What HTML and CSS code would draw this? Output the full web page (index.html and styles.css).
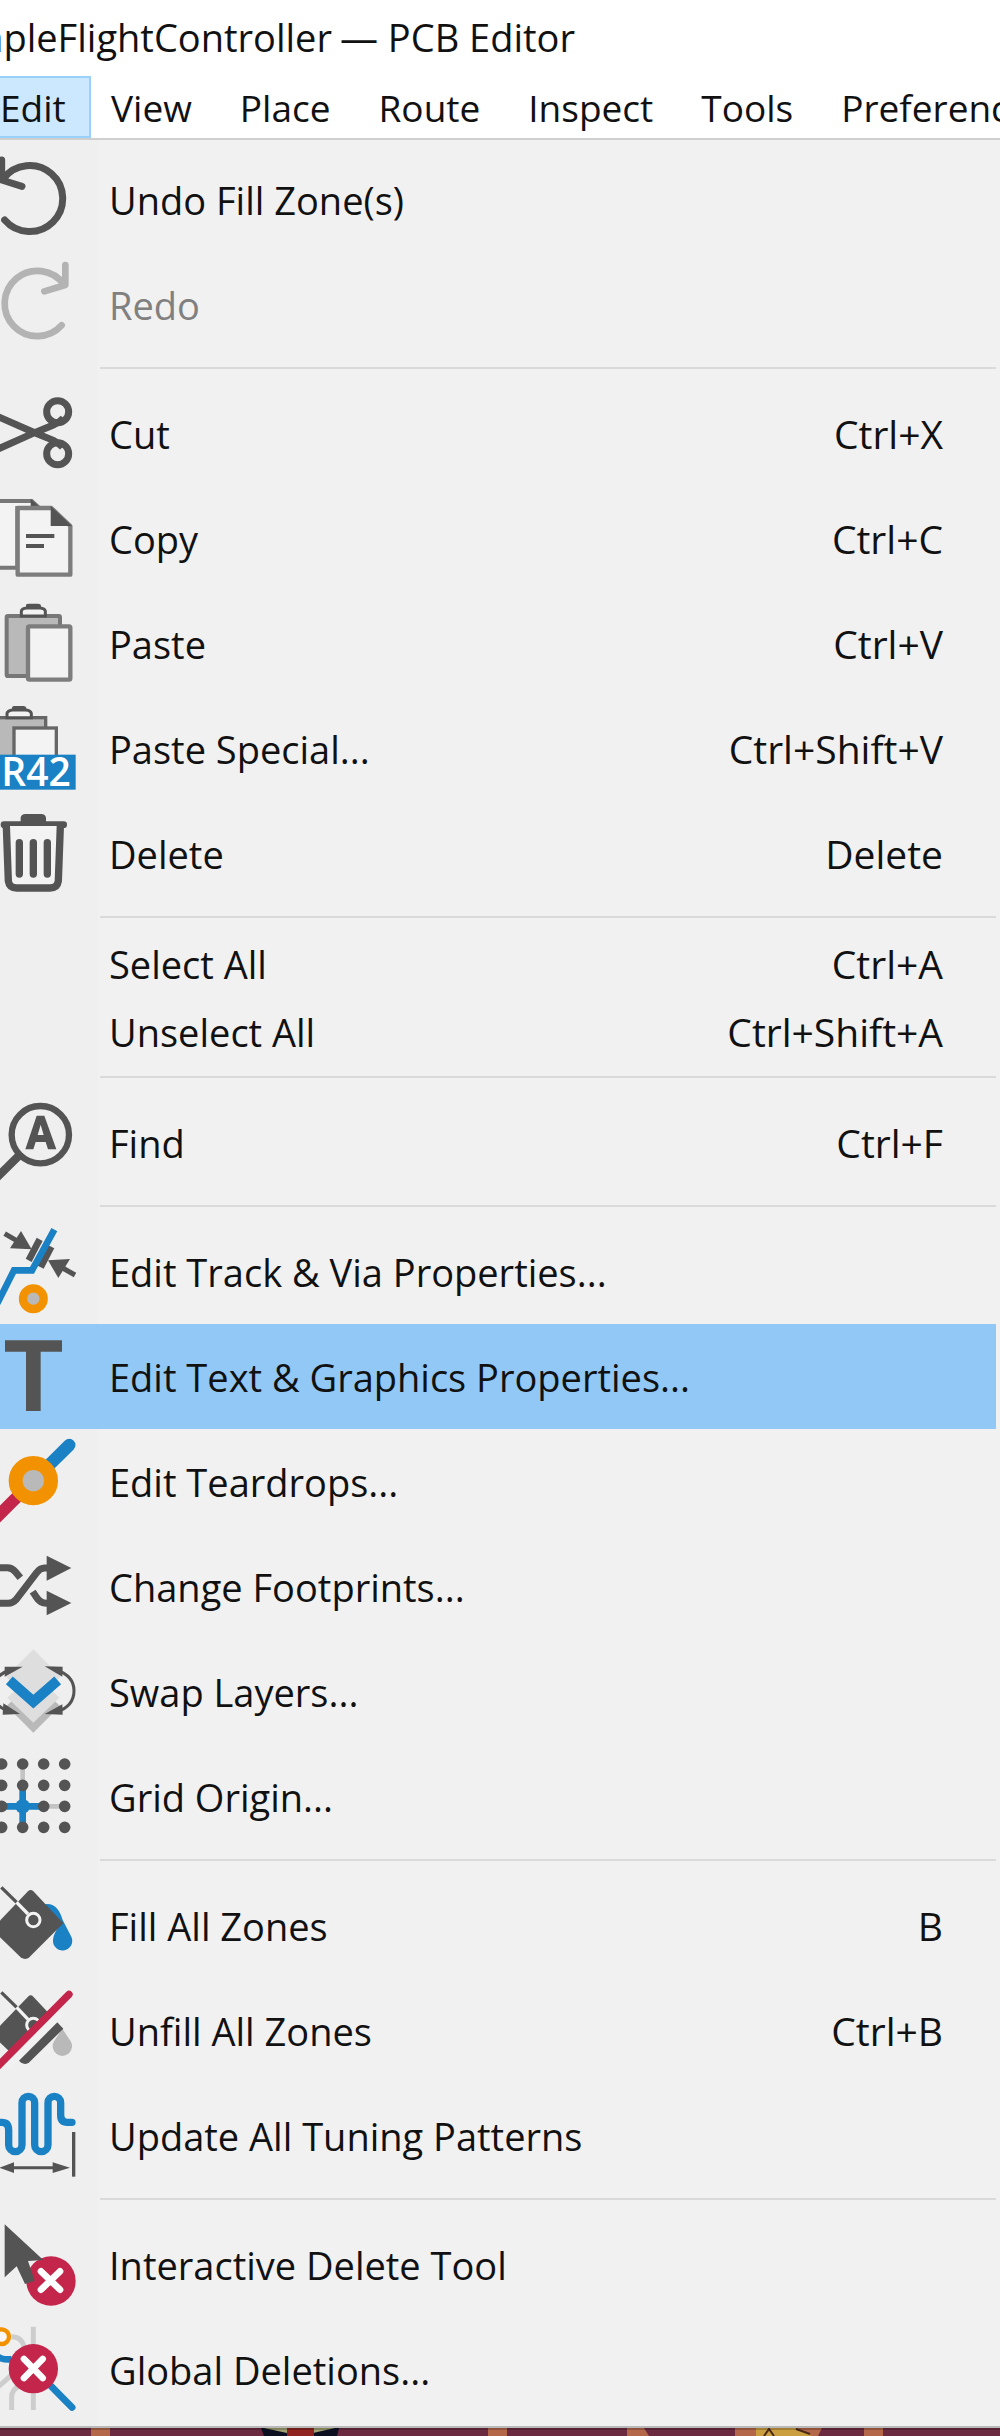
FILE: index.html
```html
<!DOCTYPE html>
<html lang="en">
<head>
<meta charset="utf-8">
<meta name="viewport" content="width=device-width, initial-scale=1">
<title>SimpleFlightController — PCB Editor</title>
<link rel="stylesheet" href="styles.css">
</head>
<body>
<header class="titlebar"><h1 class="title"><span class="project">SimpleFlightController</span> — PCB Editor</h1></header>
<nav class="menubar" aria-label="Main menu">
  <button class="menu-title open" aria-expanded="true">Edit</button>
  <button class="menu-title">View</button>
  <button class="menu-title">Place</button>
  <button class="menu-title">Route</button>
  <button class="menu-title">Inspect</button>
  <button class="menu-title">Tools</button>
  <button class="menu-title">Preferences</button>
</nav>
<main class="menu" role="menu" aria-label="Edit">
  <button class="item" role="menuitem">
    <svg class="icon" viewBox="0 21 294 315" aria-hidden="true"><g fill="none" stroke="#545454" stroke-width="21" stroke-linecap="round"><path d="M14 240A99 99 0 1 0 10 116"/><path d="M5 60V120L66 139" stroke-linejoin="round"/></g></svg>
    <span class="label">Undo Fill Zone(s)</span>
  </button>
  <button class="item" role="menuitem" disabled>
    <svg class="icon" viewBox="0 336 294 315" aria-hidden="true"><g fill="none" stroke="#b3b3b3" stroke-width="20" stroke-linecap="round" stroke-linejoin="round"><path d="M185 556A98 98 0 1 1 192 434"/><path d="M196 375V435L133 454"/></g></svg>
    <span class="label">Redo</span>
  </button>
  <hr class="separator">
  <button class="item" role="menuitem">
    <svg class="icon" viewBox="0 723 294 315" aria-hidden="true"><g fill="none" stroke="#545454" stroke-width="21"><circle cx="173" cy="815" r="33"/><circle cx="173" cy="941" r="33"/><path d="M-10 828L104 878L160 901Q178 910 188 922M-10 929L104 878L160 855Q178 847 190 834"/></g></svg>
    <span class="label">Cut</span><kbd class="shortcut">Ctrl+X</kbd>
  </button>
  <button class="item" role="menuitem">
    <svg class="icon" viewBox="0 18 294 315" aria-hidden="true"><path d="M-20 63H95L118 84H52V263H-20" fill="#f3f3f3" stroke="#777" stroke-width="12"/><path d="M92 56L122 84H92Z" fill="#545454"/><path d="M53 84H154L211 138V284H53Z" fill="#f3f3f3" stroke="#7d7d7d" stroke-width="13" stroke-linejoin="round"/><path d="M152 78L216 138H152Z" fill="#545454"/><path d="M78 168H163M78 198H132" stroke="#545454" stroke-width="12"/></svg>
    <span class="label">Copy</span><kbd class="shortcut">Ctrl+C</kbd>
  </button>
  <button class="item" role="menuitem">
    <svg class="icon" viewBox="0 333 294 315" aria-hidden="true"><rect x="20" y="408" width="160" height="180" rx="4" fill="#b9b9b9" stroke="#777" stroke-width="12"/><path d="M64 408V393Q66 385 80 384H120Q134 385 136 393V408Z" fill="#f3f3f3" stroke="#545454" stroke-width="9"/><path d="M78 385V374Q80 371 86 371H114Q122 371 123 376V385Z" fill="#545454"/><rect x="84" y="439" width="127" height="160" rx="4" fill="#f3f3f3" stroke="#7d7d7d" stroke-width="13"/></svg>
    <span class="label">Paste</span><kbd class="shortcut">Ctrl+V</kbd>
  </button>
  <button class="item" role="menuitem">
    <svg class="icon" viewBox="0 648 294 315" aria-hidden="true"><rect x="-30" y="713" width="167" height="150" fill="#b9b9b9" stroke="#666" stroke-width="10"/><path d="M21 713V700Q23 692 38 690H78Q92 692 94 700V713Z" fill="#f3f3f3" stroke="#545454" stroke-width="9"/><path d="M36 691V682Q38 678 44 678H70Q78 678 79 684V691Z" fill="#545454"/><rect x="42" y="744" width="127" height="120" fill="#f3f3f3" stroke="#666" stroke-width="10"/><rect x="-10" y="824" width="237" height="105" fill="#1a81c4"/><text x="4" y="919" class="badge-text">R42</text></svg>
    <span class="label">Paste Special...</span><kbd class="shortcut">Ctrl+Shift+V</kbd>
  </button>
  <button class="item" role="menuitem">
    <svg class="icon" viewBox="0 963 294 315" aria-hidden="true"><path d="M62 1028V1013Q64 1002 76 1002H124Q136 1002 138 1013V1028Z" fill="#545454"/><path d="M12 1034H191" stroke="#545454" stroke-width="20" stroke-linecap="round"/><path d="M19 1038L25 1203Q28 1224 50 1224H150Q172 1224 175 1203L181 1038" fill="#f3f3f3" stroke="#545454" stroke-width="22"/><path d="M58 1088V1182M100 1088V1182M142 1088V1182" stroke="#545454" stroke-width="22" stroke-linecap="round"/></svg>
    <span class="label">Delete</span><kbd class="shortcut">Delete</kbd>
  </button>
  <hr class="separator">
  <button class="item compact" role="menuitem"><span class="label">Select All</span><kbd class="shortcut">Ctrl+A</kbd></button>
  <button class="item compact" role="menuitem"><span class="label">Unselect All</span><kbd class="shortcut">Ctrl+Shift+A</kbd></button>
  <hr class="separator">
  <button class="item" role="menuitem">
    <svg class="icon" viewBox="0 30 294 315" aria-hidden="true"><circle cx="121" cy="164" r="86" fill="none" stroke="#545454" stroke-width="19"/><path d="M58 226L-10 293" stroke="#545454" stroke-width="25"/><path d="M76 208L110 107H133L169 208H144L137 186H107L100 208ZM113 165H131L122 134Z" fill="#545454" fill-rule="evenodd"/></svg>
    <span class="label">Find</span><kbd class="shortcut">Ctrl+F</kbd>
  </button>
  <hr class="separator">
  <button class="item" role="menuitem">
    <svg class="icon" viewBox="0 417 294 315" aria-hidden="true"><g stroke="#545454"><path d="M14 461L50 482M188 564L225 585" stroke-width="15"/><path d="M86 541L119 478M122 562L154 500" stroke-width="20"/></g><path d="M63 453L95 508L30 505ZM144 541L210 537L175 594Z" fill="#545454"/><path d="M-8 670L42 571H96L163 449" fill="none" stroke="#1a81c4" stroke-width="20"/><circle cx="100" cy="656" r="31" fill="#b9b9b9" stroke="#f39200" stroke-width="25"/></svg>
    <span class="label">Edit Track &amp; Via Properties...</span>
  </button>
  <button class="item selected" role="menuitem">
    <svg class="icon" viewBox="0 732 294 315" aria-hidden="true"><path d="M15 781H186V815H122V993H78V815H15Z" fill="#545454"/></svg>
    <span class="label">Edit Text &amp; Graphics Properties...</span>
  </button>
  <button class="item" role="menuitem">
    <svg class="icon" viewBox="0 27 294 315" aria-hidden="true"><path d="M100 182L-15 297" stroke="#c4254a" stroke-width="36"/><path d="M100 182L208 75" stroke="#1a81c4" stroke-width="37" stroke-linecap="round"/><circle cx="100" cy="182" r="53" fill="#b9b9b9" stroke="#f39200" stroke-width="42"/></svg>
    <span class="label">Edit Teardrops...</span>
  </button>
  <button class="item" role="menuitem">
    <svg class="icon" viewBox="0 342 294 315" aria-hidden="true"><g fill="none" stroke="#545454" stroke-width="21"><path d="M-10 443H22Q36 443 46 455L61 473M-10 550H25Q38 550 48 539L110 458Q120 444 134 444H150M98 515L108 530Q120 550 140 550H150"/></g><path d="M140 407L214 444L140 482ZM140 512L214 549L140 586Z" fill="#545454"/></svg>
    <span class="label">Change Footprints...</span>
  </button>
  <button class="item" role="menuitem">
    <svg class="icon" viewBox="0 657 294 315" aria-hidden="true"><path d="M20 858L100 780L180 858L100 938Z" fill="#b9b9b9"/><path d="M22 833L100 758L178 833L100 908Z" fill="#dedede"/><path d="M18 770L100 688L182 770L100 850Z" fill="#dedede"/><g fill="none" stroke="#545454" stroke-width="9"><path d="M170 750Q222 768 222 812Q222 858 170 876M30 750Q-22 768 -22 812Q-22 858 30 876"/></g><path d="M134 739L188 740L187 770ZM134 882L187 853L188 884ZM68 740L14 740L14 770ZM60 882L10 850L8 884Z" fill="#545454"/><path d="M28 781L100 845L173 781" fill="none" stroke="#1a81c4" stroke-width="31"/></svg>
    <span class="label">Swap Layers...</span>
  </button>
  <button class="item" role="menuitem">
    <svg class="icon" viewBox="0 972 294 315" aria-hidden="true"><path d="M68 1032V1100M120 1159H194" stroke="#c4c4c4" stroke-width="14"/><path d="M5 1159H130M68 1100V1220" stroke="#1a81c4" stroke-width="20"/><circle cx="68" cy="1159" r="22" fill="#1a81c4"/><g fill="none" stroke="#545454" stroke-width="35" stroke-linecap="round" stroke-dasharray="0 63"><path d="M5 1032H200M5 1096H200M5 1222H200M131 1159H200M5 1159H30"/></g></svg>
    <span class="label">Grid Origin...</span>
  </button>
  <hr class="separator">
  <button class="item" role="menuitem">
    <svg class="icon" viewBox="0 9 294 315" aria-hidden="true"><path d="M134 103Q172 96 188 150L214 200A29 29 0 1 1 160 204Q160 195 178 166L150 130Z" fill="#1a81c4"/><path d="M-12 164L84 64Q92 56 100 64L190 160L88 262Q76 272 62 262L-12 190Z" fill="#545454"/><path d="M4 52L50 97" stroke="#545454" stroke-width="10"/><path d="M50 97L84 132" stroke="#f3f3f3" stroke-width="10"/><circle cx="100" cy="150" r="20" fill="none" stroke="#f3f3f3" stroke-width="9"/></svg>
    <span class="label">Fill All Zones</span><kbd class="shortcut">B</kbd>
  </button>
  <button class="item" role="menuitem">
    <svg class="icon" viewBox="0 324 294 315" aria-hidden="true"><path d="M187 476L212 514A29 29 0 1 1 162 514Z" fill="#b9b9b9"/><path d="M-12 480L84 380Q92 372 100 380L190 476L88 577Q76 587 62 577L-12 506Z" fill="#545454"/><path d="M4 367L50 412" stroke="#545454" stroke-width="10"/><path d="M50 412L84 448" stroke="#f3f3f3" stroke-width="10"/><circle cx="100" cy="465" r="20" fill="none" stroke="#f3f3f3" stroke-width="9"/><path d="M22 590L184 428" stroke="#f1f1f1" stroke-width="24"/><path d="M-10 592L207 373" stroke="#c4254a" stroke-width="22" stroke-linecap="round"/></svg>
    <span class="label">Unfill All Zones</span><kbd class="shortcut">Ctrl+B</kbd>
  </button>
  <button class="item" role="menuitem">
    <svg class="icon" viewBox="0 639 294 315" aria-hidden="true"><path d="M-10 757H5Q26 757 26 780V825A20 20 0 0 0 66 825V698A19 19 0 0 1 104 698V825A20 20 0 0 0 144 825V698A19 19 0 0 1 182 698V735Q182 757 202 757H216" fill="none" stroke="#1a81c4" stroke-width="22" stroke-linecap="round"/><path d="M221 786V920" stroke="#545454" stroke-width="10"/><path d="M20 893H180" stroke="#545454" stroke-width="9"/><path d="M-2 893L42 877V909ZM210 893L158 877V909Z" fill="#545454"/></svg>
    <span class="label">Update All Tuning Patterns</span>
  </button>
  <hr class="separator">
  <button class="item" role="menuitem">
    <svg class="icon" viewBox="0 36 294 315" aria-hidden="true"><circle cx="153" cy="243" r="74" fill="#c4254a"/><path d="M123 214L180 269M180 214L123 269" stroke="#fff" stroke-width="20" stroke-linecap="round"/><path d="M14 73L130 180L84 183L104 242L75 252L50 199L14 232Z" fill="#545454"/></svg>
    <span class="label">Interactive Delete Tool</span>
  </button>
  <button class="item" role="menuitem">
    <svg class="icon" viewBox="0 351 294 315" aria-hidden="true"><g fill="none" stroke="#cdcdcd" stroke-width="15"><path d="M100 380V440M100 570V630M35 630V590Q35 570 60 555M-5 560L35 525M35 410Q65 410 72 440"/></g><circle cx="5" cy="410" r="22" fill="#f8f8f8" stroke="#f39200" stroke-width="13"/><path d="M-6 470Q5 480 35 478" fill="none" stroke="#1a81c4" stroke-width="20"/><path d="M145 550L216 622" stroke="#1a81c4" stroke-width="21" stroke-linecap="round"/><circle cx="100" cy="506" r="74" fill="#c4254a"/><path d="M72 477L128 534M128 477L72 534" stroke="#fff" stroke-width="20" stroke-linecap="round"/></svg>
    <span class="label">Global Deletions...</span>
  </button>
</main>
<svg class="canvas" viewBox="0 0 1000 8" preserveAspectRatio="xMinYMin slice" aria-hidden="true"><rect width="1000" height="8" fill="#6c2a40"/><path d="M91 0H110V8H91ZM488 0H507V8H488ZM627 0H644L649 8H627ZM735 0H822L818 8H735ZM864 0H883V8H864Z" fill="#b5674a"/><path d="M261 0H339L337 8H264Z" fill="#0d1020"/><path d="M264 0H335L313 5H287Z" fill="#a2a274"/><path d="M287 0H314V8H287Z" fill="#8f2420"/><path d="M756 0H795L812 8H756Z" fill="#cb9f3f"/><path d="M764 8L769 1L774 8M796 1L810 6" fill="none" stroke="#4b2a18" stroke-width="2"/><rect width="1000" height="2" fill="#000" opacity=".2"/></svg>
</body>
</html>
```
FILE: styles.css
```css
* { box-sizing: border-box; }

body {
  margin: 0;
  min-height: 100vh;
  display: flex;
  flex-direction: column;
  overflow-x: hidden;
  background: #fff;
  color: #111;
  font-family: "Open Sans", "Noto Sans", sans-serif;
  font-size: 38px;
  line-height: 52px;
}

button {
  border: 0;
  margin: 0;
  padding: 0;
  background: none;
  color: inherit;
  font: inherit;
  text-align: left;
}

.titlebar {
  height: 76px;
  padding: 11px 0;
  overflow: hidden;
}

.title {
  display: flex;
  gap: 8px;
  margin: 0;
  font-size: 38px;
  font-weight: 400;
  white-space: nowrap;
}

.project {
  display: flex;
  justify-content: flex-end;
  width: 332px;
}

.menubar {
  display: flex;
  height: 64px;
  border-bottom: 2px solid #cfcfcf;
  overflow: hidden;
}

.menu-title {
  flex: none;
  height: 62px;
  padding: 2px 28px 0 20px;
  font-size: 37px;
}

.menu-title.open {
  width: 91px;
  padding: 2px 26px 0 0;
  border: 2px solid #99d1fb;
  border-left: 0;
  background: #cce8ff;
  text-align: right;
}

.menu {
  padding: 7px 4px 4px 0;
  border-bottom: 2px solid #b9b9b9;
  background: linear-gradient(90deg, #efefef 98px, #f1f1f1 98px);
}

.item {
  display: flex;
  align-items: center;
  width: 100%;
  height: 105px;
  padding-right: 53px;
}

.item.compact {
  height: 68px;
  padding-left: 98px;
}

.item.selected { background: #91c8f6; }

.item:disabled { color: #808080; }

.icon {
  flex: none;
  width: 98px;
  height: 105px;
}

.badge-text {
  fill: #fff;
  font: 600 117px "Open Sans", sans-serif;
}

.label {
  flex: 1;
  padding-left: 11px;
  white-space: nowrap;
}

.shortcut {
  font-family: inherit;
  font-size: 39px;
}

.separator {
  height: 2px;
  margin: 10px 0 12px 100px;
  border: 0;
  background: #dadada;
}

.canvas {
  display: block;
  flex: 1 0 7px;
  width: 100%;
  height: 7px;
}
```
